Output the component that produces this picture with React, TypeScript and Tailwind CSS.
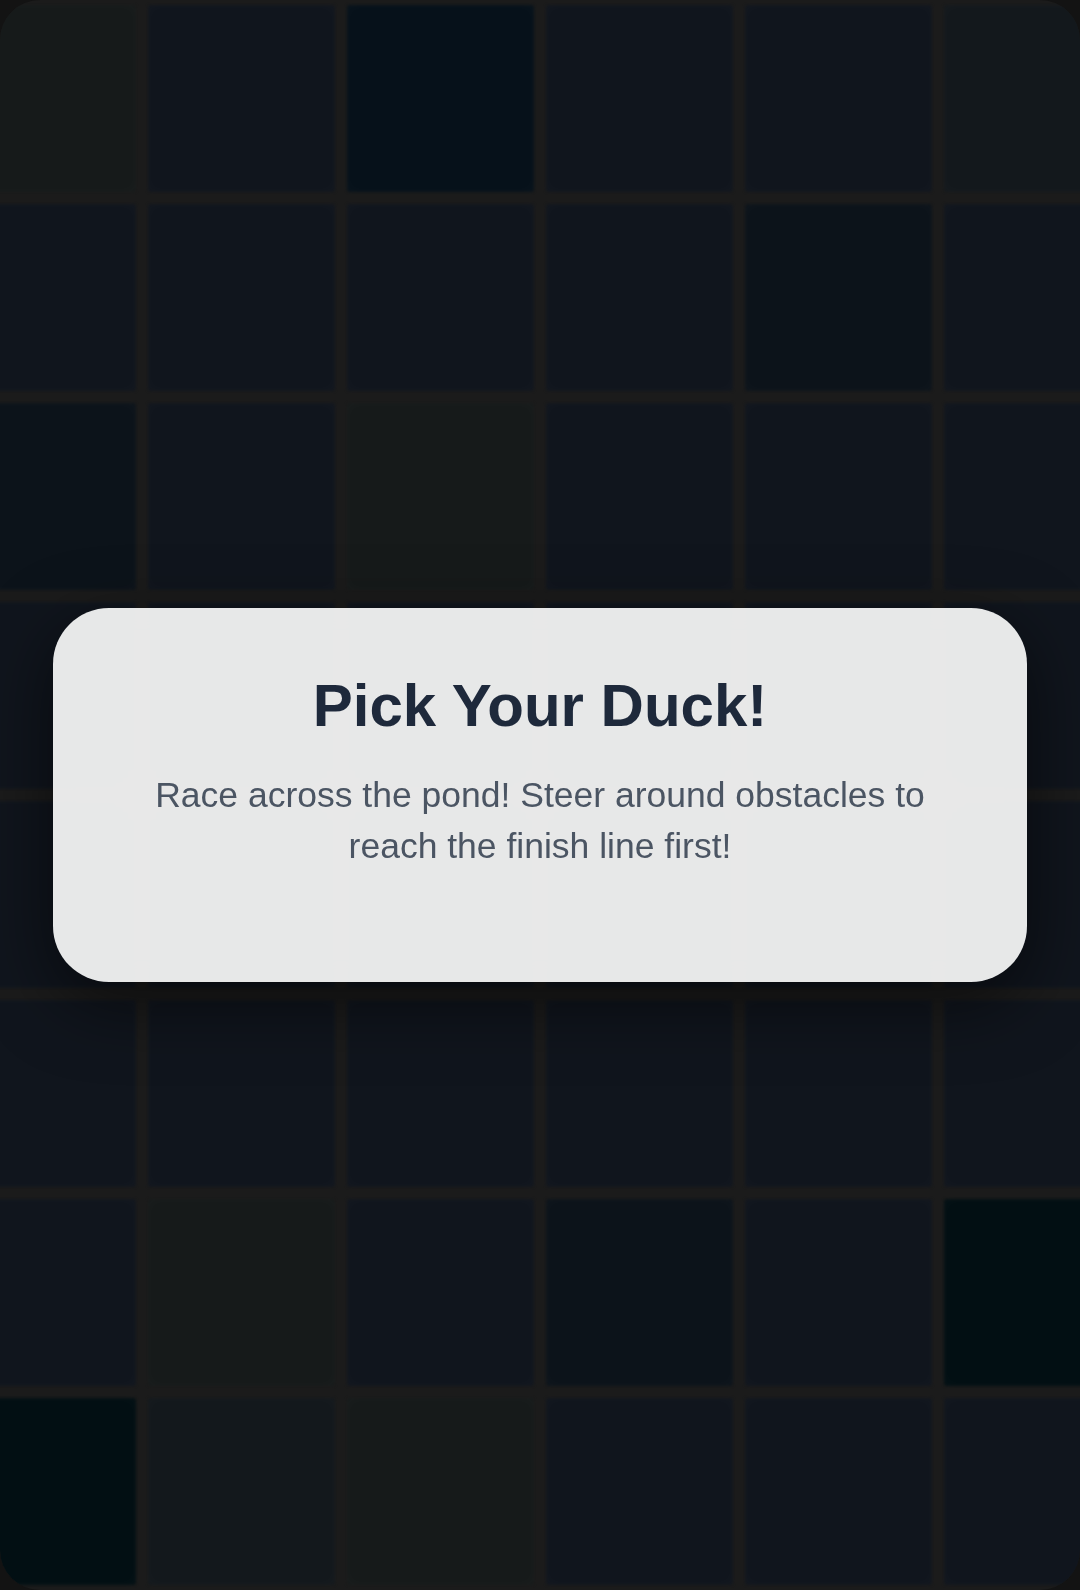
import React from "react";

const N = "bg-[#10151d]";
const T = "bg-[#06111a]";
const G = "bg-[#161a1a]";
const D = "bg-[#0c131a]";
const M = "bg-[#13181c]";
const K = "bg-[#020f13]";

const rows: string[][] = [
  [G, N, T, N, N, M],
  [N, N, N, N, D, N],
  [D, N, G, N, N, N],
  [N, N, N, N, N, N],
  [N, N, N, N, N, N],
  [N, N, N, N, N, N],
  [N, G, N, D, N, K],
  [K, M, G, N, N, N],
];

export default function App() {
  return (
    <div className="w-[1080px] h-[1590px] bg-[#131313]" style={{ fontFamily: '"Liberation Sans", Arial, sans-serif' }}>
      <div className="relative h-full w-full overflow-hidden rounded-[40px] bg-[#1b1b1b]">
        <div className="flex h-full justify-center py-[5px] blur-[1.5px]">
          <div className="grid shrink-0 grid-cols-[repeat(6,187px)] grid-rows-[repeat(8,187px)] gap-3">
            {rows.flatMap((r, i) =>
              r.map((c, j) => (
                <div
                  key={`${i}-${j}`}
                  className={`${c} rounded-[3px] shadow-[inset_0_0_14px_rgba(255,255,255,0.025)]`}
                />
              ))
            )}
          </div>
        </div>
        <div className="absolute inset-0 flex items-center justify-center px-[53px]">
          <div className="w-full rounded-[56px] bg-white/90 px-[87px] pt-[68px] pb-[110px] text-center shadow-[0_20px_70px_rgba(0,0,0,0.55)] backdrop-blur-md">
            <h1 className="text-[60px] font-bold leading-none text-[#1e293b]">Pick Your Duck!</h1>
            <p className="mt-[34px] text-[35.5px] leading-[51px] text-[#4b5563]">
              Race across the pond! Steer around obstacles to reach the finish line first!
            </p>
          </div>
        </div>
      </div>
    </div>
  );
}
